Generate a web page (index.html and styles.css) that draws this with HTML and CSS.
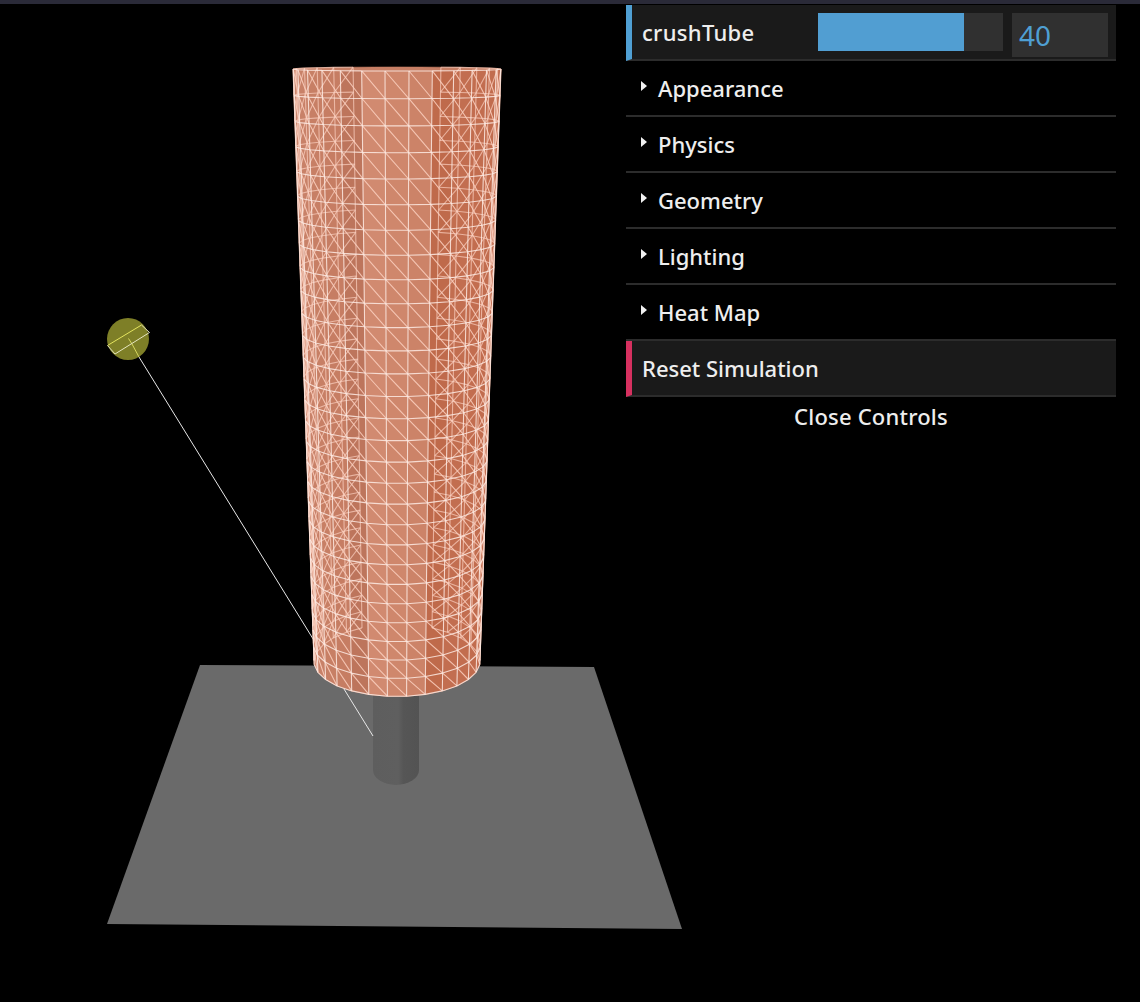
FILE: index.html
```html
<!DOCTYPE html>
<html lang="en">
<head>
<meta charset="utf-8">
<title>crushTube</title>
<link rel="stylesheet" href="styles.css">
</head>
<body>
<div class="topbar"></div>
<main class="stage">
  <svg class="scene" id="scene" viewBox="0 4 1140 998" width="1140" height="998" xmlns="http://www.w3.org/2000/svg">
    <defs>
      <linearGradient id="rod" x1="0" x2="1" y1="0" y2="0">
        <stop offset="0" stop-color="#5e5e5e"/>
        <stop offset="0.55" stop-color="#5f5f5f"/>
        <stop offset="0.66" stop-color="#565656"/>
        <stop offset="1" stop-color="#535353"/>
      </linearGradient>
    </defs>
    <polygon class="floor" points="200,665 594,667 682,929 107,924"/>
    <path class="rod" d="M373 690 H419 V770 A23 15 0 0 1 373 770 Z"/>
    <line class="ray" x1="139" y1="357" x2="373" y2="736"/>
    <circle class="bulb" cx="128" cy="339" r="21"/>
    <line class="ray-y" x1="128.5" y1="338.5" x2="132" y2="344"/>
    <line class="ray-y" x1="132" y1="344" x2="139" y2="357"/>
    <polyline class="frame-y" points="107.5,345.5 141.5,325"/>
    <polyline class="frame-w" points="141.5,325 149.5,332.5 115,354 107.5,345.5"/>
    <g id="tube"></g>
  </svg>
  <aside class="panel">
    <div class="row row-num">
      <span class="label">crushTube</span>
      <div class="slider"><div class="slider-fill"></div></div>
      <div class="num">40</div>
    </div>
    <div class="row row-folder"><i class="arrow"></i><span>Appearance</span></div>
    <div class="row row-folder"><i class="arrow"></i><span>Physics</span></div>
    <div class="row row-folder"><i class="arrow"></i><span>Geometry</span></div>
    <div class="row row-folder"><i class="arrow"></i><span>Lighting</span></div>
    <div class="row row-folder"><i class="arrow"></i><span>Heat Map</span></div>
    <div class="row row-btn"><span class="label">Reset Simulation</span></div>
    <div class="close">Close Controls</div>
  </aside>
</main>
<script src="scene.js"></script>
</body>
</html>
```
FILE: styles.css
```css
html, body {
  margin: 0;
  height: 1002px;
  overflow: hidden;
  background: #000;
}
.topbar {
  height: 4px;
  background: #2a2a38;
}
.stage {
  position: relative;
  height: 998px;
}
.scene {
  display: block;
}
.floor { fill: #6a6a6a; }
.rod { fill: url(#rod); }
.ray { stroke: #e8e8e8; stroke-width: 1; }
.bulb { fill: #7e7f27; }
.ray-y { stroke: #d8d860; stroke-width: 1; }
.frame-y { fill: none; stroke: #e4e45e; stroke-width: 1; }
.frame-w { fill: none; stroke: #e6e6c0; stroke-width: 1; }

.w-db, .w-vb, .w-rb, .w-df, .w-vf, .w-rf {
  fill: none;
  stroke-width: 1.1;
}
.w-db { stroke: #fbd0c0; stroke-opacity: 0.7; }
.w-vb { stroke: #fbd0c0; stroke-opacity: 0.7; }
.w-rb { stroke: #fbd0c0; stroke-opacity: 0.7; }
.w-df { stroke: #fbd0c0; stroke-opacity: 0.85; }
.w-vf { stroke: #fdeae3; stroke-opacity: 0.85; }
.w-rf { stroke: #fdeae3; stroke-opacity: 0.85; }

.panel {
  position: absolute;
  left: 626px;
  top: 1px;
  width: 490px;
  font-family: "Noto Sans", "Open Sans", sans-serif;
  font-size: 22px;
  font-weight: 500;
  color: #eee;
}
.row {
  box-sizing: border-box;
  height: 56px;
  display: flex;
  align-items: center;
  border-bottom: 2px solid #2c2c2c;
}
.row-num, .row-btn {
  background: #1a1a1a;
  padding-left: 10px;
  border-left: 6px solid #4f9fd3;
}
.row-btn {
  border-left-color: #d6305f;
}
.row-folder {
  padding-left: 15px;
  gap: 11px;
  background: #000;
}
.label {
  flex: none;
}
.row-num .label {
  width: 176px;
  letter-spacing: 0.3px;
}
.arrow {
  flex: none;
  width: 0;
  height: 0;
  margin-top: -4px;
  border-left: 6px solid #f0f0f0;
  border-top: 5px solid transparent;
  border-bottom: 5px solid transparent;
}
.slider {
  width: 185px;
  height: 38px;
  background: #303030;
}
.slider-fill {
  width: 146px;
  height: 100%;
  background: #519ed2;
}
.num {
  box-sizing: border-box;
  width: 96px;
  height: 44px;
  margin-left: 9px;
  margin-top: 6px;
  padding-left: 7px;
  background: #303030;
  color: #4f9fd3;
  font-size: 28px;
  font-weight: 400;
  line-height: 44px;
}
.close {
  height: 38px;
  line-height: 38px;
  text-align: center;
  letter-spacing: 0.2px;
}
```
FILE: scene.js
```js
(function () {
  var NS = "http://www.w3.org/2000/svg";
  var tube = document.getElementById("tube");
  var SEG = 28, ROWS = 28, K = 0.253, A = 741, CX = 397, P = 0.03;
  var STEP = 2 * Math.PI / SEG;

  function at(th, j) {
    var u = (j / ROWS) / (1 + K * j / ROWS);
    var y0 = 69 + A * u;
    var w = 104 * (1 - K * u);
    var b = 2 + 34 * (y0 - 69) / 591;
    var c = Math.cos(th);
    return [CX + w * Math.sin(th) * (1 + P * c), y0 + b * c];
  }
  // near-side vertices sit half a cell off the far-side vertices
  function pt(i, j) { return at((i + 0.5) * STEP, j); }
  function pb(i, j) { return at((i + 1) * STEP, j); }
  function s(p) { return p[0].toFixed(1) + " " + p[1].toFixed(1); }
  function add(d, cls, fill) {
    var el = document.createElementNS(NS, "path");
    el.setAttribute("d", d);
    el.setAttribute("fill", fill || "none");
    if (cls) el.setAttribute("class", cls);
    else if (fill) { el.setAttribute("stroke", fill); el.setAttribute("stroke-width", "0.6"); }
    tube.appendChild(el);
  }

  // silhouette base: far side of the top ring, then near side of the bottom ring
  var d = "", i, j;
  for (i = 20; i >= 6; i--) { d += (d ? "L" : "M") + s(pb(i, 0)); }
  d += "L" + s(pb(6, ROWS));
  for (i = 6; i >= -7; i--) { d += "L" + s(pt(i, ROWS)); }
  d += "L" + s(pb(20, ROWS));
  add(d + "Z", null, "#c77f65");

  // flat-shaded facets of the near side, left to right
  var shades = ["#c9836a", "#c88168", "#c77f65", "#c67d63", "#bd755c",
                "#d18a70", "#cf876c", "#cc8368",
                "#bf6a4b", "#c26e50", "#c26d4f", "#c16c4e", "#c26e51"];
  for (i = -7; i < 6; i++) {
    add("M" + s(pt(i, 0)) + "L" + s(pt(i + 1, 0)) + "L" + s(pt(i + 1, ROWS)) + "L" + s(pt(i, ROWS)) + "Z",
        null, shades[i + 7]);
  }

  // far side of the wireframe; it does not show through the middle facets
  var vb = "", vf = "", rb = "", rf = "", db = "", df = "";
  for (i = 6; i <= 20; i++) {
    if (i < 12 || i > 14) vb += "M" + s(pb(i, 0)) + "L" + s(pb(i, ROWS));
    if (i === 20 || (i >= 11 && i <= 14)) continue;
    for (j = 0; j <= ROWS; j++) {
      rb += "M" + s(pb(i, j)) + "L" + s(pb(i + 1, j));
      if (j < ROWS) db += "M" + s(pb(i, j)) + "L" + s(pb(i + 1, j + 1));
    }
  }

  // near side of the wireframe
  for (i = -7; i <= 6; i++) {
    vf += "M" + s(pt(i, 0)) + "L" + s(pt(i, ROWS));
    if (i === 6) continue;
    for (j = 0; j <= ROWS; j++) {
      rf += "M" + s(pt(i, j)) + "L" + s(pt(i + 1, j));
      if (j < ROWS) df += "M" + s(pt(i, j)) + "L" + s(pt(i + 1, j + 1));
    }
  }
  add(db, "w-db"); add(vb, "w-vb"); add(rb, "w-rb");
  add(df, "w-df"); add(vf, "w-vf"); add(rf, "w-rf");
})();
```
